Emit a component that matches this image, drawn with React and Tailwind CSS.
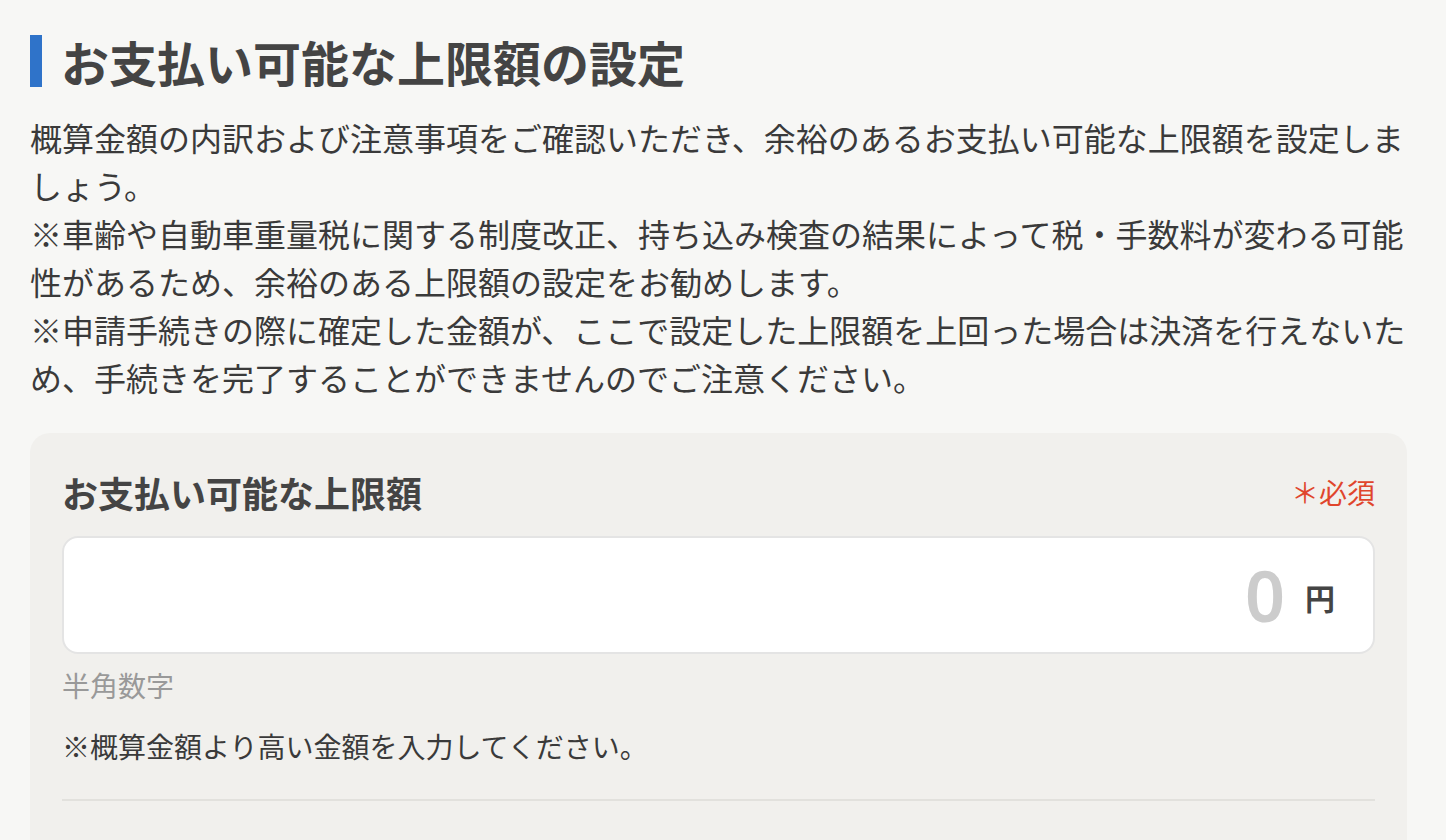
const font = { fontFamily: '"Noto Sans CJK JP", "Noto Sans", sans-serif' };

export default function App() {
  return (
    <div className="min-h-[840px] bg-[#f7f7f5] text-[#333] overflow-hidden" style={font}>
      <div className="w-[1377px] ml-[30px] pt-[35px]">
        <h1 className="flex items-center gap-[19px]">
          <span className="block w-[12px] h-[52px] bg-[#2f73c9]" />
          <span className="text-[48px] leading-[52px] font-bold text-[#444]">
            お支払い可能な上限額の設定
          </span>
        </h1>

        <div className="mt-[26px] text-[32px] leading-[48px] text-[#3a3a3a]">
          <p>概算金額の内訳および注意事項をご確認いただき、余裕のあるお支払い可能な上限額を設定しましょう。</p>
          <p>※車齢や自動車重量税に関する制度改正、持ち込み検査の結果によって税・手数料が変わる可能性があるため、余裕のある上限額の設定をお勧めします。</p>
          <p>※申請手続きの際に確定した金額が、ここで設定した上限額を上回った場合は決済を行えないため、手続きを完了することができませんのでご注意ください。</p>
        </div>

        <section className="mt-[32px] bg-[#f1f0ed] rounded-[20px] px-[32px] pt-[32px] pb-[40px]">
          <div className="flex items-center justify-between">
            <h2 className="text-[36px] leading-[54px] font-bold text-[#444]">お支払い可能な上限額</h2>
            <span className="text-[28px] leading-[42px] text-[#e0452c]">＊必須</span>
          </div>

          <div className="mt-[17px] h-[118px] bg-white border-2 border-[#e4e4e4] rounded-[16px] flex items-center justify-end pr-[38px]">
            <span className="text-[70px] leading-none font-semibold text-[#cccccc]" style={{ fontFamily: '"Noto Sans", sans-serif' }}>
              0
            </span>
            <span className="ml-[20px] mt-[4px] text-[30px] leading-none font-bold text-[#444]">円</span>
          </div>

          <p className="mt-[10px] text-[28px] leading-[42px] text-[#999]">半角数字</p>

          <p className="mt-[19px] text-[28px] leading-[42px] text-[#3a3a3a]">※概算金額より高い金額を入力してください。</p>

          <div className="mt-[32px] h-[2px] bg-[#e2e1dd]" />
          <div className="h-[120px]" />
        </section>
      </div>
    </div>
  );
}
